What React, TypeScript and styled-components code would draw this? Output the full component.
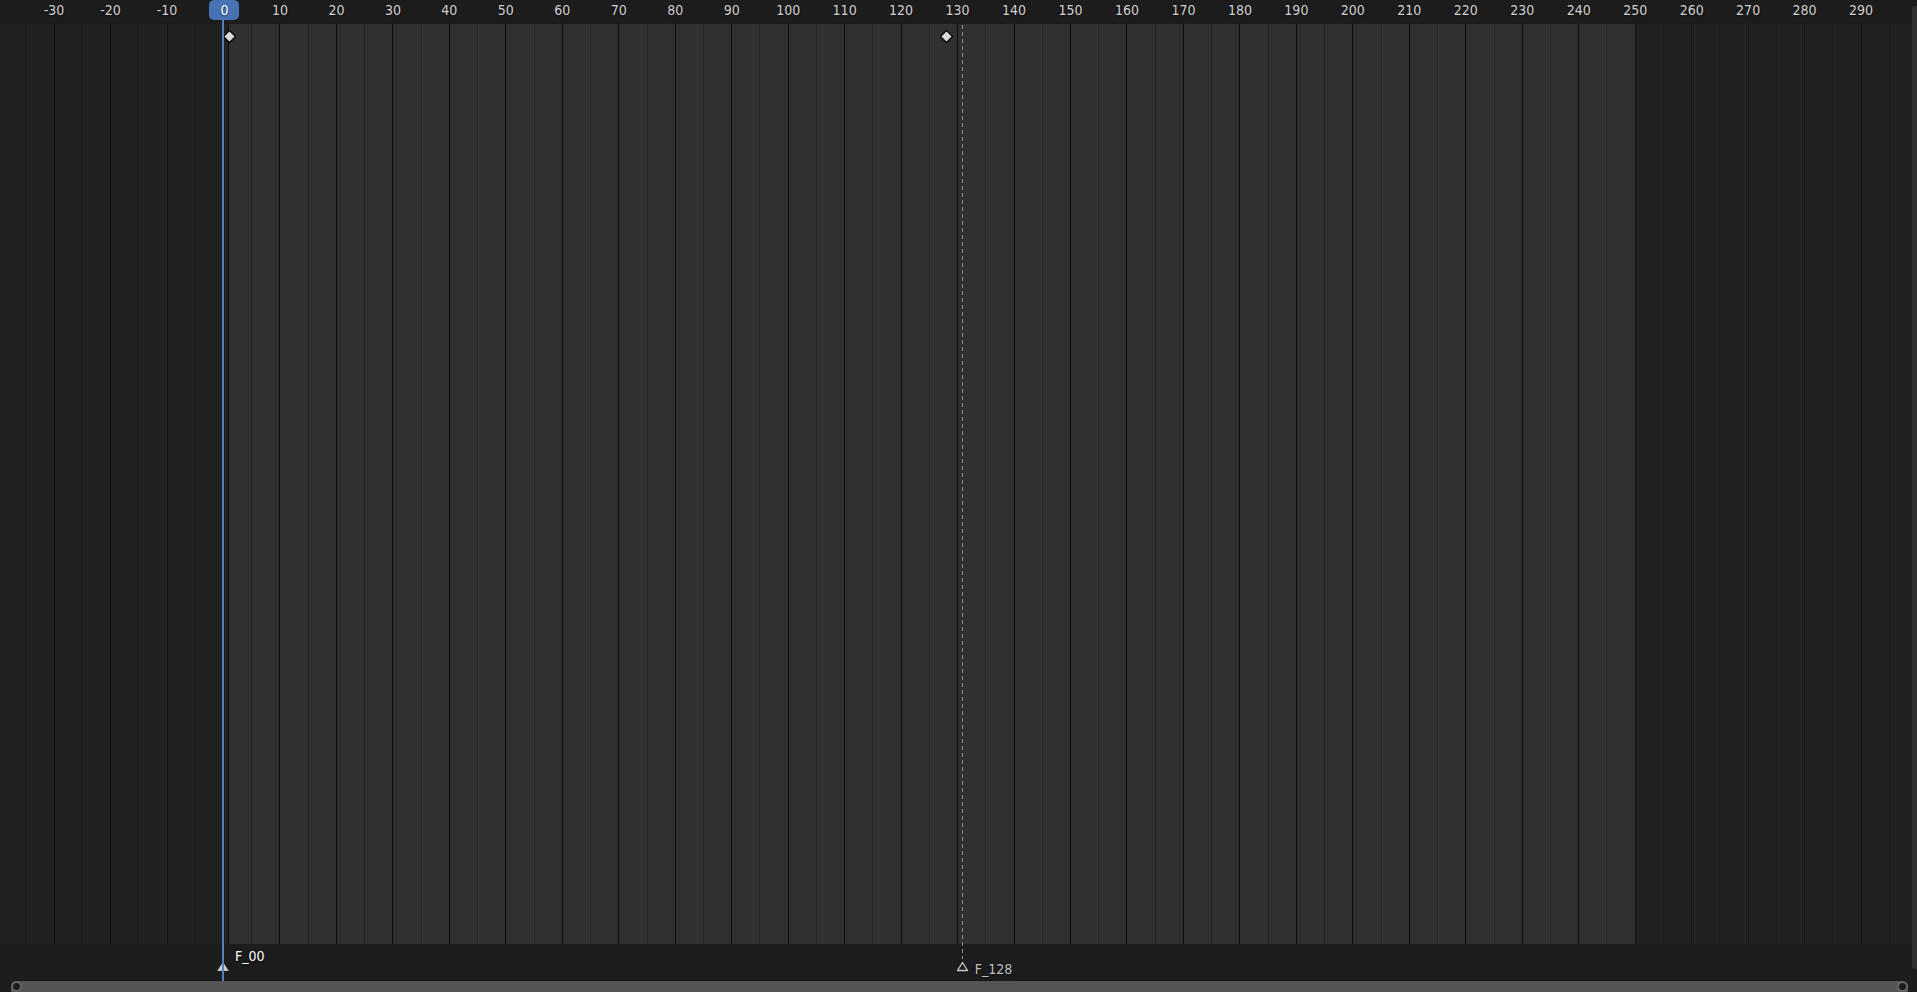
import React from "react";
import styled, { createGlobalStyle } from "styled-components";

const FRAME_START = 1;
const FRAME_END = 250;
const VIEW_START = -39.49;
const VIEW_SPAN = 339.47;
const FIRST_MINOR = -35;

const span = (frames: number) => `${(frames / VIEW_SPAN) * 100}%`;
const at = (frame: number) => span(frame - VIEW_START);

const majors: number[] = [];
for (let f = -30; f <= 290; f += 10) majors.push(f);
const gridFrames: number[] = [];
for (let f = FIRST_MINOR; f < 300; f += 5) gridFrames.push(f);
const keyframes = [1, 128];

const GlobalStyle = createGlobalStyle`
  html, body, #root { height: 100%; margin: 0; }
  body {
    background: #1c1c1c;
    color: #d0d0d0;
    font: 14px/16px "DejaVu Sans Condensed", "DejaVu Sans", sans-serif;
    overflow: hidden;
  }
`;

const Editor = styled.main`
  position: relative;
  display: flex;
  flex-direction: column;
  height: 100%;
  overflow: hidden;
`;

const Ruler = styled.header`
  display: flex;
  flex: 0 0 24px;
  padding-top: 2px;
  box-sizing: border-box;
`;

const Tick = styled.span`
  box-sizing: border-box;
  flex: 0 0 ${span(10)};
  padding-left: 1px;
  text-align: center;
  text-shadow: 0 1px 2px #0a0a0a;

  &:first-child {
    margin-left: ${at(FIRST_MINOR)};
  }
`;

const Channels = styled.section`
  position: relative;
  display: flex;
  flex: 1;
  background: #212121;
  overflow: hidden;
`;

const Grid = styled.div`
  position: relative;
  display: flex;
  flex: 1;
  min-width: 0;
`;

const GridCell = styled.div<{ $frame: number }>`
  box-sizing: border-box;
  flex: 0 0 ${span(5)};
  border-left: 1px solid
    ${({ $frame }) => {
      const active = $frame > 0 && $frame <= FRAME_END;
      if ($frame % 10 === 0) return active ? "#0c0c0c" : "#131313";
      return active ? "#252525" : "#1b1b1b";
    }};

  &:first-child {
    margin-left: ${at(FIRST_MINOR)};
  }
`;

const ActiveRange = styled.div`
  position: absolute;
  top: 0;
  bottom: 0;
  left: ${at(FRAME_START)};
  width: ${span(FRAME_END - FRAME_START)};
  margin-left: -1px;
  border-left: 1px solid #101010;
  background: #303030;
`;

const Diamond = styled.svg<{ $frame: number }>`
  position: absolute;
  top: 5px;
  left: ${(p) => at(p.$frame)};
  width: 15px;
  height: 15px;
  margin-left: -7px;
`;

const Markers = styled.footer`
  position: relative;
  flex: 0 0 36px;
`;

const Marker = styled.div<{ $frame: number; $selected?: boolean }>`
  position: absolute;
  top: 0;
  left: ${(p) => at(p.$frame)};
  display: flex;
  gap: 6px;
  margin-left: -7px;
  color: ${(p) => (p.$selected ? "#ffffff" : "#bebebe")};
  text-shadow: 0 1px 2px #0a0a0a;
`;

const MarkerIcon = styled.svg`
  width: 13px;
  height: 11px;
  margin-top: 17px;
`;

const MarkerName = styled.span<{ $raised?: boolean }>`
  padding-top: ${(p) => (p.$raised ? 4 : 17)}px;
`;

const MarkerGuide = styled.div<{ $frame: number }>`
  position: absolute;
  top: 24px;
  bottom: 33px;
  left: ${(p) => at(p.$frame)};
  width: 1px;
  margin-left: -1px;
  background: repeating-linear-gradient(transparent 0 1px, #8e8e8e 1px 5px, transparent 5px 7px);
`;

const HorizontalScroll = styled.div`
  display: flex;
  flex: 0 0 12px;
  justify-content: space-between;
  box-sizing: border-box;
  margin: 0 9px 0 11px;
  border-top: 1px solid #161616;
  border-radius: 6px 6px 0 0;
  background: #545454;
`;

const Handle = styled.button`
  box-sizing: border-box;
  width: 11px;
  height: 11px;
  padding: 0;
  border: 2px solid #666666;
  border-radius: 50%;
  background: #1c1c1c;
`;

const VerticalScroll = styled.div`
  position: absolute;
  top: 6px;
  right: 0;
  bottom: 23px;
  width: 5px;
  border-radius: 3px 0 0 3px;
  background: #303030;
`;

const Playhead = styled.div<{ $frame: number }>`
  position: absolute;
  top: 0;
  bottom: 11px;
  left: ${(p) => at(p.$frame)};
  display: flex;
  flex-direction: column;
  align-items: center;
  width: 30px;
  margin-left: -14px;
`;

const FrameButton = styled.button`
  width: 100%;
  height: 20px;
  padding: 0 0 1px 1px;
  border: 0;
  border-radius: 5px;
  background: #4772b3;
  color: #ffffff;
  font: inherit;
  text-shadow: 0 1px 2px #203860;
`;

const PlayheadLine = styled.div`
  flex: 1;
  width: 2px;
  margin-right: 2px;
  background: #5680c2;
`;

export default function App() {
  return (
    <>
      <GlobalStyle />
      <Editor>
        <Ruler>
          {majors.map((f) => (
            <Tick key={f}>{f === 0 ? "" : f}</Tick>
          ))}
        </Ruler>
        <Channels>
          <ActiveRange />
          <Grid>
            {gridFrames.map((f) => (
              <GridCell key={f} $frame={f} />
            ))}
          </Grid>
          {keyframes.map((f) => (
            <Diamond key={f} $frame={f} viewBox="0 0 15 15">
              <path d="M7.5 1.5 13.5 7.5 7.5 13.5 1.5 7.5Z" fill="#dadada" stroke="#080808" strokeWidth="1.4" />
            </Diamond>
          ))}
        </Channels>
        <Markers>
          <Marker $frame={0} $selected>
            <MarkerIcon viewBox="0 0 13 11">
              <path d="M7 1 12.8 10H1.2Z" fill="#c8c8c8" />
            </MarkerIcon>
            <MarkerName $raised>F_00</MarkerName>
          </Marker>
          <Marker $frame={131}>
            <MarkerIcon viewBox="0 0 13 11">
              <path d="M6.5 1.5 11.5 9.5H1.5Z" fill="none" stroke="#c8c8c8" strokeWidth="1.3" strokeLinejoin="round" />
            </MarkerIcon>
            <MarkerName>F_128</MarkerName>
          </Marker>
        </Markers>
        <HorizontalScroll>
          <Handle aria-label="Zoom range start" />
          <Handle aria-label="Zoom range end" />
        </HorizontalScroll>
        <MarkerGuide $frame={131} />
        <VerticalScroll />
        <Playhead $frame={0}>
          <FrameButton aria-label="Current frame">0</FrameButton>
          <PlayheadLine />
        </Playhead>
      </Editor>
    </>
  );
}
